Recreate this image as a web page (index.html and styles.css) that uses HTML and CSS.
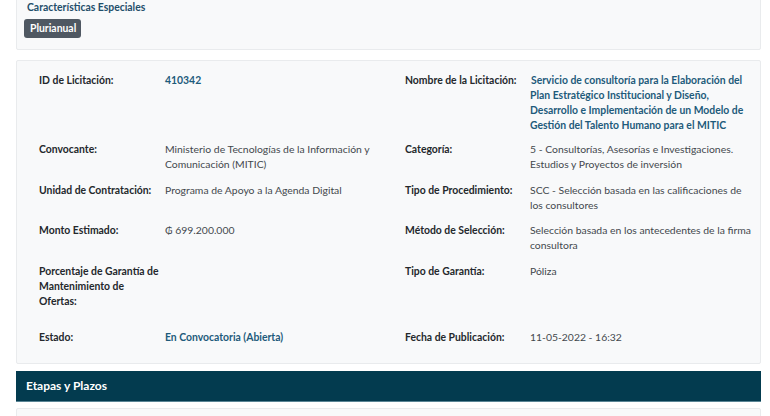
FILE: index.html
```html
<!DOCTYPE html>
<html lang="es">
<head>
<meta charset="utf-8">
<link rel="stylesheet" href="styles.css">
</head>
<body>
<div class="page">
  <section class="card card-top">
    <h4 class="sub-title">Características Especiales</h4>
    <div class="badges"><span class="badge">Plurianual</span></div>
  </section>

  <section class="card card-info">
    <div class="row row-first">
      <div class="label">ID de Licitación:</div>
      <div class="value link">410342</div>
      <div class="label">Nombre de la Licitación:</div>
      <div class="value link title-val">Servicio de consultoría para la Elaboración del Plan Estratégico Institucional y Diseño, Desarrollo e Implementación de un Modelo de Gestión del Talento Humano para el MITIC</div>
    </div>
    <div class="row">
      <div class="label">Convocante:</div>
      <div class="value">Ministerio de Tecnologías de la Información y Comunicación (MITIC)</div>
      <div class="label">Categoría:</div>
      <div class="value">5 - Consultorías, Asesorías e Investigaciones. Estudios y Proyectos de inversión</div>
    </div>
    <div class="row">
      <div class="label">Unidad de Contratación:</div>
      <div class="value">Programa de Apoyo a la Agenda Digital</div>
      <div class="label">Tipo de Procedimiento:</div>
      <div class="value">SCC - Selección basada en las calificaciones de los consultores</div>
    </div>
    <div class="row">
      <div class="label">Monto Estimado:</div>
      <div class="value">₲ 699.200.000</div>
      <div class="label">Método de Selección:</div>
      <div class="value">Selección basada en los antecedentes de la firma consultora</div>
    </div>
    <div class="row row-tall">
      <div class="label">Porcentaje de Garantía de Mantenimiento de Ofertas:</div>
      <div class="value"></div>
      <div class="label">Tipo de Garantía:</div>
      <div class="value">Póliza</div>
    </div>
    <div class="row row-last">
      <div class="label">Estado:</div>
      <div class="value link">En Convocatoria (Abierta)</div>
      <div class="label">Fecha de Publicación:</div>
      <div class="value">11-05-2022 - 16:32</div>
    </div>
  </section>

  <div class="section-bar">Etapas y Plazos</div>
  <section class="card card-next"></section>
</div>
</body>
</html>
```

FILE: styles.css
```css
html, body {
  margin: 0;
  padding: 0;
  background: #ffffff;
}
body {
  font-family: Lato, "Noto Sans", sans-serif;
  font-size: 10.4px;
  line-height: 15px;
  color: #43484d;
}
.page {
  padding: 0 9px 0 16px;
  margin-top: -10px;
}
.card {
  background: #f8f9fa;
  border: 1px solid #e9ebed;
  border-radius: 2px;
}
.card-top {
  padding: 9px 7px 11px 7px;
  margin-bottom: 10px;
}
.sub-title {
  margin: 0 0 4px 3px;
  font-size: 10.4px;
  line-height: 15px;
  font-weight: 700;
  color: #1f4e6a;
}
.badges {
  display: flex;
}
.badge {
  display: block;
  background: #4f5862;
  color: #ffffff;
  font-weight: 700;
  font-size: 10.4px;
  line-height: 19px;
  padding: 0 5px 0 6px;
  border-radius: 3px;
}
.card-info {
  padding: 12px 0 8px 22px;
  margin-bottom: 7px;
}
.row {
  display: grid;
  grid-template-columns: 126px 240px 125px 224px;
  padding: 0 0 10.5px 0;
  min-height: 15px;
}
.row-first { padding-bottom: 9px; }
.row-tall { padding-bottom: 21px; }
.label {
  font-weight: 700;
  color: #24282c;
  max-width: 120px;
}
.value {
  padding-right: 0;
}
.link {
  color: #1e5b7b;
  font-weight: 700;
}
.title-val { text-indent: 1px; padding-right: 6px; }
.section-bar {
  background: #033b4f;
  color: #ffffff;
  font-weight: 700;
  font-size: 12px;
  line-height: 30px;
  padding: 0 10px;
  border-bottom: 1px solid #5a8595;
  margin-bottom: 6px;
}
.card-next {
  height: 30px;
}
```
